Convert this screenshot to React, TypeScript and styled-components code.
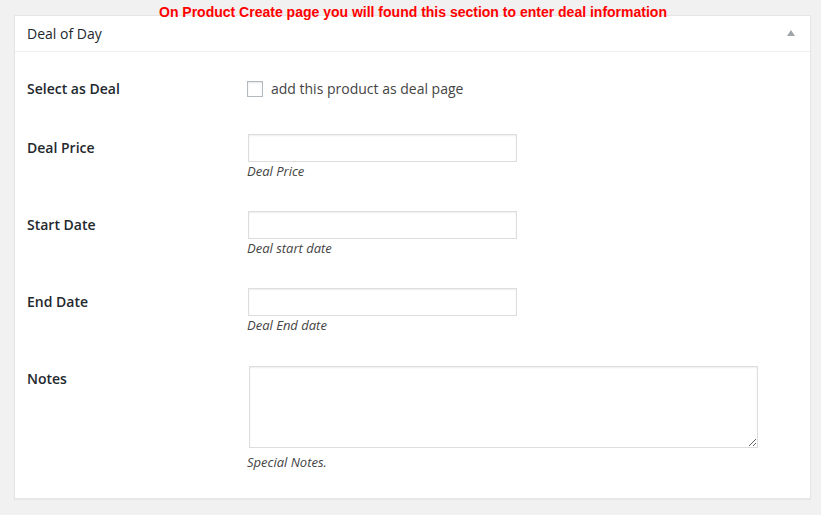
import React from "react";
import styled, { createGlobalStyle } from "styled-components";

const Global = createGlobalStyle`
  html, body { margin: 0; padding: 0; background: #f1f1f1; }
  body { font-family: "Open Sans", "Noto Sans", sans-serif; color: #444; }
  * { box-sizing: border-box; }
`;

const Page = styled.div`
  position: relative;
  width: 821px;
  height: 515px;
  padding: 15px 10px 0 14px;
`;

const Notice = styled.div`
  position: absolute;
  top: 4px;
  left: 159px;
  font-family: "Liberation Sans", Arial, sans-serif;
  font-weight: 700;
  font-size: 14px;
  line-height: 17px;
  color: #ff0000;
  white-space: nowrap;
`;

const Panel = styled.div`
  width: 797px;
  background: #fff;
  border: 1px solid #e5e5e5;
  box-shadow: 0 1px 1px rgba(0, 0, 0, 0.04);
`;

const Header = styled.div`
  display: flex;
  align-items: center;
  justify-content: space-between;
  height: 36px;
  padding: 0 12px;
  border-bottom: 1px solid #eee;
`;

const Title = styled.h2`
  margin: 0;
  font-size: 14px;
  font-weight: 400;
  line-height: 18px;
  color: #23282d;
`;

const Toggle = styled.svg`
  width: 8px;
  height: 6px;
  margin-right: 3px;
  margin-top: -1px;
`;

const Body = styled.div`
  padding: 8px 12px 11px;
`;

const Row = styled.div<{ $bottom?: number }>`
  display: flex;
  padding: 15px 0 ${(p) => p.$bottom ?? 16}px;
`;

const Label = styled.div`
  width: 220px;
  flex: none;
  padding-top: 5px;
  font-size: 14px;
  font-weight: 600;
  line-height: 18px;
  color: #23282d;
`;

const Field = styled.div`
  display: flex;
  flex-direction: column;
  align-items: flex-start;
`;

const CheckLine = styled.label`
  display: flex;
  align-items: center;
  height: 27px;
  font-size: 14px;
  color: #444;
  gap: 8px;
`;

const Check = styled.span`
  width: 16px;
  height: 16px;
  border: 1px solid #b4b9be;
  background: #fff;
  box-shadow: inset 0 1px 2px rgba(0, 0, 0, 0.1);
`;

const Input = styled.input`
  width: 269px;
  height: 28px;
  margin: 0 0 0 1px;
  border: 1px solid #ddd;
  box-shadow: inset 0 1px 2px rgba(0, 0, 0, 0.07);
  background: #fff;
  outline: none;
  font-family: inherit;
`;

const Area = styled.textarea`
  width: 509px;
  height: 82px;
  margin: 1px 0 0 2px;
  border: 1px solid #ddd;
  box-shadow: inset 0 1px 2px rgba(0, 0, 0, 0.07);
  background: #fff;
  outline: none;
  display: block;
  font-family: inherit;
`;

const Desc = styled.p<{ $gap?: number }>`
  margin: ${(p) => p.$gap ?? 0}px 0 0;
  font-size: 13px;
  font-style: italic;
  line-height: 18px;
  color: #444;
`;

const fields = [
  { label: "Deal Price", desc: "Deal Price" },
  { label: "Start Date", desc: "Deal start date" },
  { label: "End Date", desc: "Deal End date" },
];

export default function App() {
  return (
    <>
      <Global />
      <Page>
        <Panel>
          <Header>
            <Title>Deal of Day</Title>
            <Toggle viewBox="0 0 8 6">
              <path d="M4 0 L8 6 L0 6 Z" fill="#a0a5aa" />
            </Toggle>
          </Header>
          <Body>
            <Row $bottom={17}>
              <Label>Select as Deal</Label>
              <Field>
                <CheckLine>
                  <Check />
                  add this product as deal page
                </CheckLine>
              </Field>
            </Row>
            {fields.map((f) => (
              <Row key={f.label}>
                <Label>{f.label}</Label>
                <Field>
                  <Input type="text" />
                  <Desc>{f.desc}</Desc>
                </Field>
              </Row>
            ))}
            <Row>
              <Label>Notes</Label>
              <Field>
                <Area />
                <Desc $gap={5}>Special Notes.</Desc>
              </Field>
            </Row>
          </Body>
        </Panel>
        <Notice>On Product Create page you will found this section to enter deal information</Notice>
      </Page>
    </>
  );
}
